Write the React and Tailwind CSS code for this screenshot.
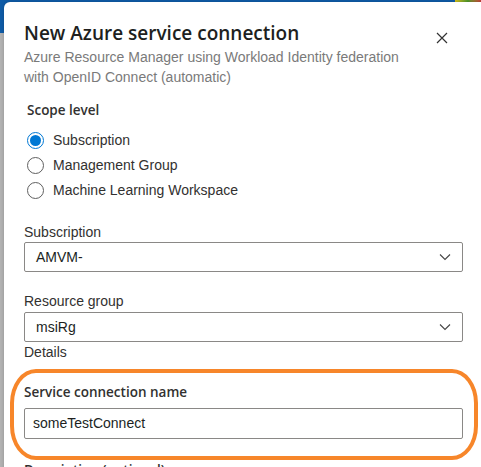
import React from "react";

function Radio({ checked, label }) {
  return (
    <div className="flex items-center h-[25px]">
      {checked ? (
        <span className="w-[17px] h-[17px] rounded-full border-[1.5px] border-[#0078d4] flex items-center justify-center ml-[27px]">
          <span className="w-[11px] h-[11px] rounded-full bg-[#0078d4]"></span>
        </span>
      ) : (
        <span className="w-[17px] h-[17px] rounded-full border border-[#5f5f5f] ml-[27px]"></span>
      )}
      <span className="ml-[9px] text-[14px] text-[#323130]">{label}</span>
    </div>
  );
}

function Chevron() {
  return (
    <svg width="12" height="8" viewBox="0 0 12 8">
      <path d="M1 1.5 L6 6.5 L11 1.5" fill="none" stroke="#444" strokeWidth="1.1" />
    </svg>
  );
}

function Select({ value }) {
  return (
    <div className="mx-[24px] h-[30px] border border-[#8a8886] rounded-[2px] flex items-center justify-between pl-[11px] pr-[11px]">
      <span className="text-[14px] text-[#201f1e]">{value}</span>
      <Chevron />
    </div>
  );
}

const semi = { fontFamily: '"Open Sans", "Liberation Sans", sans-serif' };

export default function App() {
  return (
    <div
      className="relative w-[481px] h-[467px] overflow-hidden bg-[#b4b4b4]"
      style={{ fontFamily: '"Segoe UI", "Liberation Sans", Arial, sans-serif' }}
    >
      <div className="h-[33px] bg-[#0f5ca8]"></div>
      <div className="absolute right-0 top-0 w-[26px] h-[2px] bg-gradient-to-r from-[#d8c21a] via-[#4a9a2a] to-[#c83a3a]"></div>
      <div className="absolute left-[4px] top-[2px] w-[490px] h-[480px] bg-white rounded-tl-[6px] shadow-[0_0_4px_rgba(0,0,0,0.2)]">
        <div className="flex justify-between pt-[17px] pl-[20px] pr-[46px]">
          <div>
            <div className="text-[19px] leading-[28px] font-semibold text-[#201f1e]" style={semi}>New Azure service connection</div>
            <div className="text-[14px] leading-[20px] text-[#7a7a7a]">
              Azure Resource Manager using Workload Identity federation
              <br />
              with OpenID Connect (automatic)
            </div>
          </div>
          <svg width="12" height="12" viewBox="0 0 12 12" className="mt-[13px]">
            <path d="M1 1 L11 11 M11 1 L1 11" stroke="#333" strokeWidth="1.2" />
          </svg>
        </div>
        <div className="mt-[13px] ml-[23px] text-[13.5px] leading-[20px] font-semibold text-[#323130]" style={semi}>Scope level</div>
        <div className="mt-[8px] -ml-[4px]">
          <Radio checked label="Subscription" />
          <Radio label="Management Group" />
          <Radio label="Machine Learning Workspace" />
        </div>
        <div className="-ml-[4px] w-[487px]">
          <div className="mt-[19px] ml-[24px] text-[14px] leading-[20px] text-[#323130]">Subscription</div>
          <Select value="AMVM-" />
          <div className="mt-[19px] ml-[24px] text-[14px] leading-[20px] text-[#323130]">Resource group</div>
          <div className="mt-[1px]">
            <Select value="msiRg" />
          </div>
          <div className="ml-[24px] text-[14px] leading-[20px] text-[#323130]">Details</div>
          <div className="mt-[20px] ml-[24px] text-[13.5px] leading-[20px] font-semibold text-[#323130]" style={semi}>Service connection name</div>
          <div className="mt-[6px] mx-[24px] h-[31px] border border-[#8a8886] rounded-[2px] flex items-center pl-[8px]">
            <span className="text-[14px] text-[#201f1e]">someTestConnect</span>
          </div>
          <div className="mt-[21px] ml-[24px] text-[13.5px] leading-[20px] font-semibold text-[#323130]" style={semi}>Description (optional)</div>
        </div>
      </div>
      <div className="absolute left-[10px] top-[369px] w-[468px] h-[91px] border-[4px] border-[#f7862a] rounded-[26px/34px]"></div>
    </div>
  );
}
